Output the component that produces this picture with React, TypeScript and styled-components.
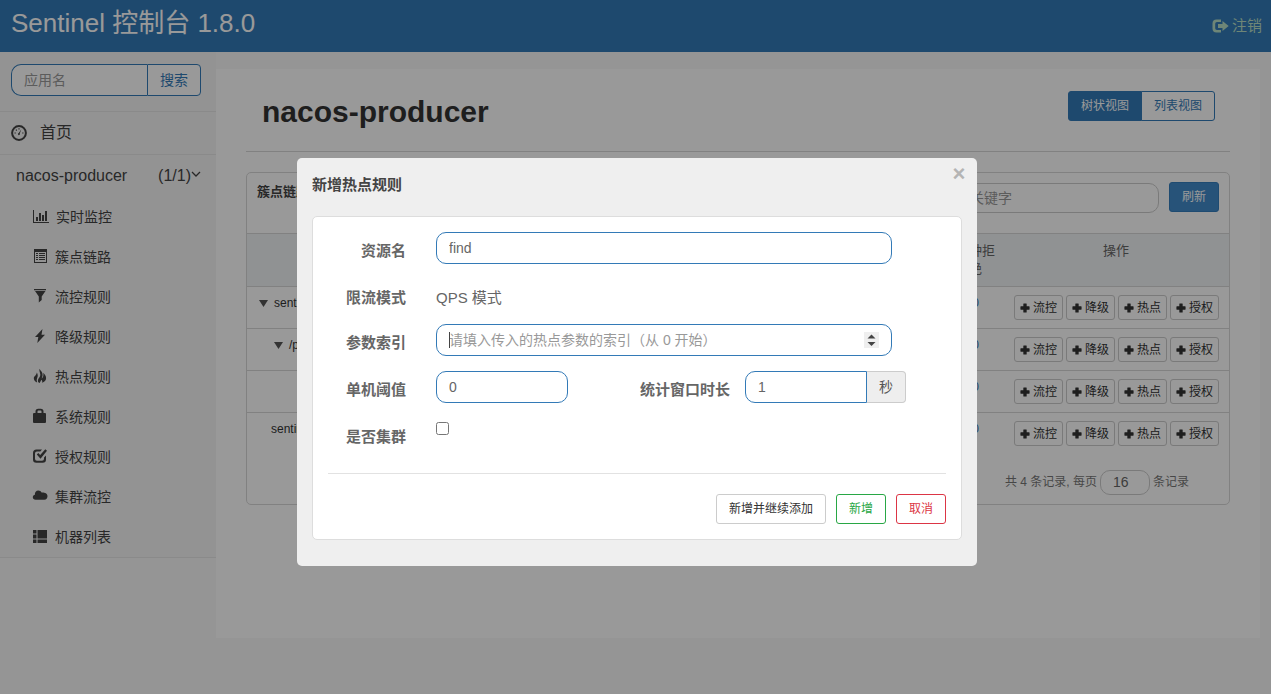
import React from "react";
import styled, { createGlobalStyle, css } from "styled-components";

const blue = "#337ab7";
const line = "#d8d8d8";

const GlobalStyle = createGlobalStyle`
  * { box-sizing: border-box; }
  body {
    margin: 0;
    background: #f8f8f8;
    color: #333;
    font: 14px/20px "Liberation Sans", "Noto Sans CJK SC", sans-serif;
  }
  button, input { font: inherit; margin: 0; }
  button { cursor: pointer; }
  a { color: inherit; text-decoration: none; }
`;

const Page = styled.div`
  min-height: 100vh;
  display: flex;
  flex-direction: column;
`;

const TopBar = styled.header`
  height: 52px;
  padding: 0 9px 0 11px;
  display: flex;
  align-items: center;
  justify-content: space-between;
  background: ${blue};
`;

const Brand = styled.a`
  color: #fff;
  font-size: 26px;
  line-height: 32px;
  padding-bottom: 6px;
`;

const Logout = styled.a`
  display: flex;
  align-items: center;
  gap: 3px;
  color: #b8dfc6;
  font-size: 15px;
`;

const Columns = styled.div`
  display: flex;
  align-items: flex-start;
`;

const Sidebar = styled.aside`
  flex: 0 0 216px;
  min-width: 0;
  border-bottom: 1px solid #e7e7e7;
  background: #f6f6f6;
`;

const AppSearch = styled.form`
  display: flex;
  padding: 12px 15px 15px 11px;
`;

const fieldStyle = css`
  height: 32px;
  min-width: 0;
  padding: 0 12px;
  border: 1px solid ${blue};
  border-radius: 10px;
  background: #fff;
  color: #666;
  font-size: 14px;
  outline: none;
  &::placeholder { color: #999; opacity: 1; }
`;

const AppInput = styled.input`
  ${fieldStyle}
  flex: 1;
  width: 100%;
  border-right: 0;
  border-radius: 10px 0 0 10px;
`;

const AppSearchButton = styled.button`
  flex: none;
  height: 32px;
  padding: 0 12px;
  border: 1px solid ${blue};
  border-radius: 0 4px 4px 0;
  background: #fff;
  color: ${blue};
`;

const NavRow = styled.a<{ $split?: boolean }>`
  display: flex;
  align-items: center;
  justify-content: ${(p) => (p.$split ? "space-between" : "flex-start")};
  gap: 13px;
  height: 43px;
  padding: ${(p) => (p.$split ? "0 15px 0 16px" : "0 15px 0 11px")};
  border-top: 1px solid #e7e7e7;
  font-size: 16px;
  color: #444;
`;

const NavCount = styled.span`
  display: flex;
  align-items: center;
`;

const SubNav = styled.ul`
  list-style: none;
  margin: 0;
  padding: 0;
`;

const SubLink = styled.a`
  display: flex;
  align-items: center;
  gap: 7px;
  height: 40px;
  padding-left: 32px;
  color: #444;
  svg { margin-bottom: 2px; }
`;

const Main = styled.main`
  flex: 1;
  min-width: 0;
  min-height: 569px;
  margin: 17px 11px 0 0;
  padding: 0 30px;
  background: #fff;
`;

const TitleRow = styled.div`
  display: flex;
  align-items: flex-start;
  justify-content: space-between;
  height: 83px;
  padding: 22px 15px 0 16px;
  border-bottom: 1px solid ${line};
`;

const Title = styled.h1`
  margin: 0;
  font-size: 30px;
  line-height: 42px;
`;

const ButtonGroup = styled.div`
  display: flex;
`;

const ViewButton = styled.button<{ $active?: boolean }>`
  height: 30px;
  padding: 0 12px;
  border: 1px solid ${blue};
  background: ${(p) => (p.$active ? blue : "#fff")};
  color: ${(p) => (p.$active ? "#fff" : blue)};
  font-size: 12px;
  &:first-child { border-radius: 3px 0 0 3px; }
  &:last-child { border-radius: 0 3px 3px 0; margin-left: -1px; }
`;

const Card = styled.section`
  margin-top: 20px;
  border: 1px solid ${line};
  border-radius: 5px;
`;

const CardHead = styled.div`
  display: flex;
  align-items: flex-start;
  height: 60px;
  padding: 9px 10px 0;
`;

const CardTitle = styled.strong`
  flex: 1;
  font-size: 13px;
  color: #444;
`;

const KeywordInput = styled.input`
  ${fieldStyle}
  width: 202px;
  height: 30px;
  margin: 1px 10px 0 0;
  border-color: #ccc;
`;

const RefreshButton = styled.button`
  height: 30px;
  padding: 0 12px;
  border: 1px solid #357ebd;
  border-radius: 3px;
  background: #428bca;
  color: #fff;
  font-size: 12px;
`;

const Table = styled.table`
  width: 100%;
  table-layout: fixed;
  border-collapse: collapse;
  font-size: 12px;
  line-height: 18px;

  th {
    height: 53px;
    padding: 8px;
    border-top: 1px solid ${line};
    background: #f1f4f6;
    color: #666;
    font-size: 13px;
    font-weight: 400;
    vertical-align: top;
  }
  td {
    height: 42px;
    padding: 7px 8px 0;
    border-top: 1px solid ${line};
    vertical-align: top;
  }
  td:nth-child(2) { text-align: center; color: ${blue}; }
  th:nth-child(2) { width: 55px; }
  th:nth-child(3) { width: 226px; }
`;

const Resource = styled.span<{ $indent: number }>`
  display: flex;
  align-items: center;
  gap: 6px;
  padding-left: ${(p) => p.$indent}px;
`;

const Actions = styled.div`
  display: flex;
  justify-content: flex-end;
  gap: 3px;
  padding: 1px 2px 0 0;
`;

const ActionButton = styled.button`
  display: flex;
  align-items: center;
  justify-content: center;
  gap: 3px;
  width: 49px;
  height: 25px;
  padding: 0;
  border: 1px solid #ccc;
  border-radius: 3px;
  background: #fff;
  color: #333;
  font-size: 12px;
`;

const Pager = styled.div`
  display: flex;
  align-items: center;
  justify-content: flex-end;
  gap: 3px;
  padding: 15px 40px 9px;
  color: #777;
  font-size: 12px;
`;

const PageSize = styled.input`
  ${fieldStyle}
  width: 50px;
  height: 25px;
  border-color: #ccc;
`;

const Overlay = styled.div`
  position: fixed;
  inset: 0;
  display: flex;
  align-items: flex-start;
  justify-content: center;
  padding: 158px 0 0 3px;
  background: rgba(0, 0, 0, 0.4);
`;

const Dialog = styled.div`
  position: relative;
  width: 680px;
  padding: 15px 15px 26px;
  border-radius: 5px;
  background: #efefef;
`;

const DialogTitle = styled.h2`
  margin: 0 0 20px;
  font-size: 15px;
  line-height: 23px;
  color: #444;
`;

const CloseButton = styled.button`
  position: absolute;
  top: 6px;
  right: 8px;
  width: 20px;
  height: 20px;
  padding: 0;
  border: 0;
  background: none;
  color: #b4b4b4;
  font-size: 22px;
  font-weight: 700;
  line-height: 20px;
`;

const Panel = styled.form`
  padding: 15px;
  border: 1px solid #ddd;
  border-radius: 5px;
  background: #fff;
`;

const FormRow = styled.div`
  display: flex;
  align-items: flex-start;
  min-height: 30px;
  margin-bottom: 15px;
`;

const Label = styled.label<{ $wide?: boolean }>`
  width: ${(p) => (p.$wide ? 162 : 78)}px;
  margin-right: ${(p) => (p.$wide ? 15 : 30)}px;
  padding-top: 8px;
  text-align: right;
  font-size: 15px;
  line-height: 22px;
  font-weight: 700;
  color: #666;
`;

const StaticText = styled.span`
  padding-top: 8px;
  font-size: 15px;
  line-height: 22px;
  color: #666;
`;

const Field = styled.input<{ $width: number }>`
  ${fieldStyle}
  width: ${(p) => p.$width}px;
  &[type="number"] { appearance: textfield; }
  &::-webkit-inner-spin-button { appearance: none; margin: 0; }
`;

const StepperField = styled.div`
  position: relative;
  display: flex;
`;

const Stepper = styled.span`
  position: absolute;
  top: 8px;
  right: 13px;
  width: 15px;
  height: 16px;
  background: #efefef;
  svg { display: block; }
`;

const Caret = styled.span`
  position: absolute;
  top: 8px;
  left: 13px;
  width: 1px;
  height: 16px;
  background: #444;
`;

const WindowGroup = styled.div`
  display: flex;
  ${Field} { border-radius: 10px 0 0 10px; }
`;

const Suffix = styled.span`
  height: 32px;
  padding: 0 12px;
  border: 1px solid #ccc;
  border-left: 0;
  border-radius: 0 4px 4px 0;
  background: #eee;
  color: #555;
  line-height: 30px;
`;

const Check = styled.input`
  width: 13px;
  height: 13px;
  margin: 4px 0 0;
`;

const Footer = styled.div`
  display: flex;
  justify-content: flex-end;
  gap: 10px;
  margin-top: 25px;
  padding-top: 20px;
  border-top: 1px solid #e2e2e2;
`;

const FooterButton = styled.button<{ $tone: string; $edge?: string }>`
  height: 30px;
  padding: 0 12px;
  border: 1px solid ${(p) => p.$edge ?? p.$tone};
  border-radius: 3px;
  background: #fff;
  color: ${(p) => p.$tone};
  font-size: 12px;
`;

type IconProps = { children: React.ReactNode; width?: number };
const Icon = ({ children, width = 16 }: IconProps) => (
  <svg width={width} height={16} viewBox={`0 0 ${width} 16`} fill="currentColor" aria-hidden="true">
    {children}
  </svg>
);

const PlusIcon = () => (
  <svg width="10" height="10" viewBox="0 0 1200 1200" fill="currentColor" aria-hidden="true">
    <path d="M450 50h300q50 0 50 50v300h300q50 0 50 50v300q0 50-50 50H800v300q0 50-50 50H450q-50 0-50-50V800H100q-50 0-50-50V450q0-50 50-50h300V100q0-50 50-50z" />
  </svg>
);

const menu: { label: string; width?: number; icon: React.ReactNode }[] = [
  {
    label: "实时监控",
    width: 17,
    icon: <path d="M1 2h1v12h15v1H1zM4 9h2v4H4zM7 5h2v8H7zM10 7h2v6h-2zM13 3h2v10h-2z" />,
  },
  {
    label: "簇点链路",
    icon: (
      <path fillRule="evenodd" d="M2 1h13v14H2zM3 4v10h11V4zM4 5h2v1H4zM7 5h6v1H7zM4 7h2v1H4zM7 7h6v1H7zM4 9h2v1H4zM7 9h6v1H7zM4 11h2v1H4zM7 11h6v1H7z" />
    ),
  },
  { label: "流控规则", icon: <path d="M2 1h12v1.200H2zM3 3h10.500L9.700 8.500V12L6.800 14.500v-6z" /> },
  { label: "降级规则", icon: <path d="M10.500 1 3 9h3.300L5.300 15 13 6.700H9.500z" /> },
  {
    label: "热点规则",
    icon: (
      <path d="M7.500.8c1 2 3.300 3.500 3.100 6.200 0 1.600-.8 2.300-.8 3.500.9-.7 2-2 1.500-5.700 1.400 1.400 2.900 3.200 2.800 5.500 0 2-1.600 3.900-4.100 4.500.5-.9.3-2-.5-3-1.100 1.700-1.300 2.500-2 3.200-1.400-.6-1.900-2-1.400-3.600.6-1.600 2.400-2.700 2.200-5C8.100 4.500 7 3 7.500.8zM4.800 4.500c.8 1.600 1.200 2.700.8 4.200-.5 1.700-1.300 2.700-.5 5.700C3 13.500 1.800 12 1.800 10.200 1.800 8 4.600 7.500 4.800 4.500z" />
    ),
  },
  {
    label: "系统规则",
    icon: (
      <path fillRule="evenodd" d="M3.500 5V3.500Q3.500.8 6.200.8h2.600q2.700 0 2.700 2.700V5h1.500q1 0 1 1v8q0 1-1 1H2q-1 0-1-1V6q0-1 1-1zM5.500 5h4V3.500q0-.9-.9-.9H6.400q-.9 0-.9.9z" />
    ),
  },
  {
    label: "授权规则",
    icon: (
      <path d="M4.500 1.500H10L8.300 3.500H5Q3 3.500 3 5.500v5.300q0 2 2 2h5q2 0 2-2V9.500L14 7.500v4q0 3.300-3.300 3.300H4.300Q1 14.800 1 11.500V5q0-3.500 3.500-3.500zM4.800 6.600l1.500-1.500 1.900 1.900L13.300 1.300 15 2.700 8.500 10.800z" />
    ),
  },
  {
    label: "集群流控",
    icon: (
      <path d="M6.300 2.500c1.500 0 2.800.8 3.300 2.100 2-.4 5.900.4 5.900 3.700 0 1.900-1.200 3.400-3.200 3.400H3.500C2 11.700 .8 10.600.8 9.300.8 8 1.800 7 2.900 6.800 2.600 4.200 4.200 2.500 6.300 2.500z" />
    ),
  },
  {
    label: "机器列表",
    icon: <path d="M1 2h3.500v3.500H1zM5.500 2H15v8.500H5.500zM1 6.500h3.500v4H1zM1 11.500h3.500v3.500H1zM5.500 11.500H15v3.500H5.500z" />,
  },
];

const rows = [
  { name: "sentinel", indent: 4, open: true },
  { name: "/path", indent: 19, open: true },
  { name: "find", indent: 50, open: false },
  { name: "sentinel", indent: 16, open: false },
];

const actions = ["流控", "降级", "热点", "授权"];

export default function App() {
  return (
    <>
      <GlobalStyle />
      <Page>
        <TopBar>
          <Brand href="#">Sentinel 控制台 1.8.0</Brand>
          <Logout href="#">
            <Icon width={17}>
              <path d="M4.500 1.500H9V4H5Q3.200 4 3.200 5.800v4.400q0 1.800 1.800 1.800h4v2.500H4.500Q.5 14.500.5 10.500v-5q0-4 4-4zM10.500 3 16.700 8l-6.200 5v-3H6V6h4.500z" />
            </Icon>
            注销
          </Logout>
        </TopBar>
        <Columns>
          <Sidebar>
            <AppSearch>
              <AppInput aria-label="应用名" placeholder="应用名" />
              <AppSearchButton type="button">搜索</AppSearchButton>
            </AppSearch>
            <nav>
              <NavRow href="#">
                <Icon>
                  <circle cx="8" cy="8" r="6.900" fill="none" stroke="currentColor" strokeWidth="2" />
                  <path d="M10.300 4.200 8.800 8.600a1 1 0 1 1-1-.5zM3.500 7.500h1.300v1H3.500zM11.200 7.500h1.300v1h-1.300zM4.800 4.600h1.200v1.200H4.800zM7.400 3.300h1.200v1.200H7.400z" />
                </Icon>
                首页
              </NavRow>
              <NavRow href="#" $split>
                nacos-producer
                <NavCount>
                  (1/1)
                  <svg width="10" height="12" viewBox="0 0 10 12" fill="none" stroke="currentColor" strokeWidth="1.300" aria-hidden="true">
                    <path d="M1 2l4 4 4-4" />
                  </svg>
                </NavCount>
              </NavRow>
              <SubNav>
                {menu.map((m) => (
                  <li key={m.label}>
                    <SubLink href="#">
                      <Icon width={m.width}>{m.icon}</Icon>
                      {m.label}
                    </SubLink>
                  </li>
                ))}
              </SubNav>
            </nav>
          </Sidebar>
          <Main>
            <TitleRow>
              <Title>nacos-producer</Title>
              <ButtonGroup>
                <ViewButton type="button" $active>树状视图</ViewButton>
                <ViewButton type="button">列表视图</ViewButton>
              </ButtonGroup>
            </TitleRow>
            <Card>
              <CardHead>
                <CardTitle>簇点链路</CardTitle>
                <KeywordInput aria-label="关键字" placeholder="关键字" />
                <RefreshButton type="button">刷新</RefreshButton>
              </CardHead>
              <Table>
                <thead>
                  <tr>
                    <th>资源名</th>
                    <th>分钟拒绝</th>
                    <th>操作</th>
                  </tr>
                </thead>
                <tbody>
                  {rows.map((r, i) => (
                    <tr key={i}>
                      <td>
                        <Resource $indent={r.indent}>
                          {r.open && (
                            <svg width="9" height="8" viewBox="0 0 9 8" fill="#555" aria-hidden="true">
                              <path d="M0 1h9L4.500 8z" />
                            </svg>
                          )}
                          {r.name}
                        </Resource>
                      </td>
                      <td>0</td>
                      <td>
                        <Actions>
                          {actions.map((a) => (
                            <ActionButton key={a} type="button">
                              <PlusIcon />
                              {a}
                            </ActionButton>
                          ))}
                        </Actions>
                      </td>
                    </tr>
                  ))}
                </tbody>
              </Table>
              <Pager>
                <span>共 4 条记录, 每页</span>
                <PageSize aria-label="每页记录数" defaultValue="16" />
                <span>条记录</span>
              </Pager>
            </Card>
          </Main>
        </Columns>
      </Page>
      <Overlay>
        <Dialog role="dialog" aria-labelledby="dialog-title">
          <CloseButton type="button" aria-label="关闭">×</CloseButton>
          <DialogTitle id="dialog-title">新增热点规则</DialogTitle>
          <Panel>
            <FormRow>
              <Label htmlFor="resource">资源名</Label>
              <Field id="resource" $width={456} defaultValue="find" />
            </FormRow>
            <FormRow>
              <Label as="span">限流模式</Label>
              <StaticText>QPS 模式</StaticText>
            </FormRow>
            <FormRow>
              <Label htmlFor="param">参数索引</Label>
              <StepperField>
                <Field id="param" type="number" $width={456} placeholder="请填入传入的热点参数的索引（从 0 开始）" />
                <Caret />
                <Stepper>
                  <svg width="15" height="16" viewBox="0 0 15 16" fill="#444" aria-hidden="true">
                    <path d="M3.500 6.500 7.500 2.500l4 4zM3.500 10h8l-4 4z" />
                  </svg>
                </Stepper>
              </StepperField>
            </FormRow>
            <FormRow>
              <Label htmlFor="threshold">单机阈值</Label>
              <Field id="threshold" $width={132} defaultValue="0" />
              <Label htmlFor="window" $wide>统计窗口时长</Label>
              <WindowGroup>
                <Field id="window" $width={122} defaultValue="1" />
                <Suffix>秒</Suffix>
              </WindowGroup>
            </FormRow>
            <FormRow>
              <Label htmlFor="cluster">是否集群</Label>
              <Check id="cluster" type="checkbox" />
            </FormRow>
            <Footer>
              <FooterButton type="button" $tone="#333" $edge="#ccc">新增并继续添加</FooterButton>
              <FooterButton type="button" $tone="#28a745">新增</FooterButton>
              <FooterButton type="button" $tone="#dc3545">取消</FooterButton>
            </Footer>
          </Panel>
        </Dialog>
      </Overlay>
    </>
  );
}
